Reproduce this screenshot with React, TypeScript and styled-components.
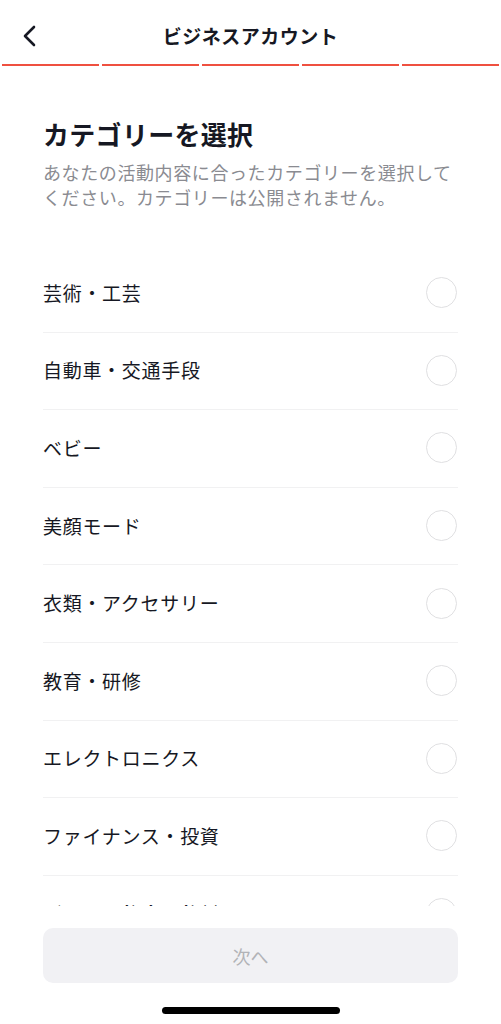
import React from 'react';
import styled, { createGlobalStyle } from 'styled-components';

const GlobalStyle = createGlobalStyle`
  * { box-sizing: border-box; }
  body {
    margin: 0;
    background: #ffffff;
    font-family: "Noto Sans CJK JP", "Noto Sans", sans-serif;
    color: #161823;
  }
`;

const Screen = styled.div`
  width: 501px;
  height: 1024px;
  display: flex;
  flex-direction: column;
  background: #ffffff;
  overflow: hidden;
`;

const Header = styled.header`
  height: 63px;
  display: flex;
  align-items: center;
  justify-content: center;
  position: relative;
`;

const BackButton = styled.button`
  position: absolute;
  left: 14px;
  top: 20px;
  width: 32px;
  height: 32px;
  border: none;
  background: none;
  padding: 0;
  display: flex;
  align-items: center;
  justify-content: center;
`;

const HeaderTitle = styled.h1`
  margin: 0;
  font-size: 19px;
  font-weight: 700;
  line-height: 26px;
  margin-top: 8px;
  letter-spacing: 0.5px;
`;

const Progress = styled.div`
  display: flex;
  gap: 3px;
  padding: 0 2px;
  height: 3px;
`;

const Segment = styled.div<{ $active: boolean }>`
  flex: 1;
  height: 2px;
  margin-top: 1px;
  background: ${(p) => (p.$active ? '#ef5040' : '#e8e8e8')};
`;

const Scroll = styled.main`
  flex: 1;
  overflow: hidden;
  padding: 51px 43px 0;
`;

const Title = styled.h2`
  margin: 0;
  font-size: 26px;
  line-height: 34px;
  font-weight: 700;
  letter-spacing: 0.3px;
  color: #161823;
`;

const Subtitle = styled.p`
  margin: 9px 0 0;
  font-size: 18px;
  line-height: 25px;
  letter-spacing: 0.6px;
  color: #8a8b91;
`;

const List = styled.ul`
  list-style: none;
  margin: 45px 0 0;
  padding: 0;
`;

const Row = styled.li`
  height: 77.6px;
  display: flex;
  align-items: center;
  justify-content: space-between;
  border-bottom: 1px solid #f1f1f2;
  padding-bottom: 1px;
`;

const Label = styled.span`
  font-size: 19px;
  line-height: 24px;
  letter-spacing: 0.7px;
  color: #161823;
`;

const Radio = styled.span`
  width: 31px;
  height: 31px;
  border-radius: 50%;
  border: 1.5px solid #e0e0e2;
  margin-right: 1px;
`;

const Footer = styled.footer`
  padding: 22px 43px 10px;
  display: flex;
  flex-direction: column;
  align-items: center;
  gap: 24px;
`;

const NextButton = styled.button`
  width: 100%;
  height: 55px;
  border: none;
  border-radius: 10px;
  background: #f1f1f4;
  color: #b2b3b7;
  font-family: inherit;
  font-size: 18px;
`;

const HomeIndicator = styled.div`
  width: 178px;
  height: 7px;
  border-radius: 4px;
  background: #000000;
`;

const categories = [
  '芸術・工芸',
  '自動車・交通手段',
  'ベビー',
  '美顔モード',
  '衣類・アクセサリー',
  '教育・研修',
  'エレクトロニクス',
  'ファイナンス・投資',
  'グルメ・飲食・飲料',
];

export default function App() {
  return (
    <Screen>
      <GlobalStyle />
      <Header>
        <BackButton aria-label="戻る">
          <svg width="18" height="22" viewBox="0 0 18 22" fill="none">
            <path d="M13 2 L4 11 L13 20" stroke="#161823" strokeWidth="2.6" strokeLinecap="round" strokeLinejoin="round" />
          </svg>
        </BackButton>
        <HeaderTitle>ビジネスアカウント</HeaderTitle>
      </Header>
      <Progress>
        {[0, 1, 2, 3, 4].map((i) => (
          <Segment key={i} $active />
        ))}
      </Progress>
      <Scroll>
        <Title>カテゴリーを選択</Title>
        <Subtitle>あなたの活動内容に合ったカテゴリーを選択してください。カテゴリーは公開されません。</Subtitle>
        <List>
          {categories.map((c) => (
            <Row key={c}>
              <Label>{c}</Label>
              <Radio />
            </Row>
          ))}
        </List>
      </Scroll>
      <Footer>
        <NextButton>次へ</NextButton>
        <HomeIndicator />
      </Footer>
    </Screen>
  );
}
